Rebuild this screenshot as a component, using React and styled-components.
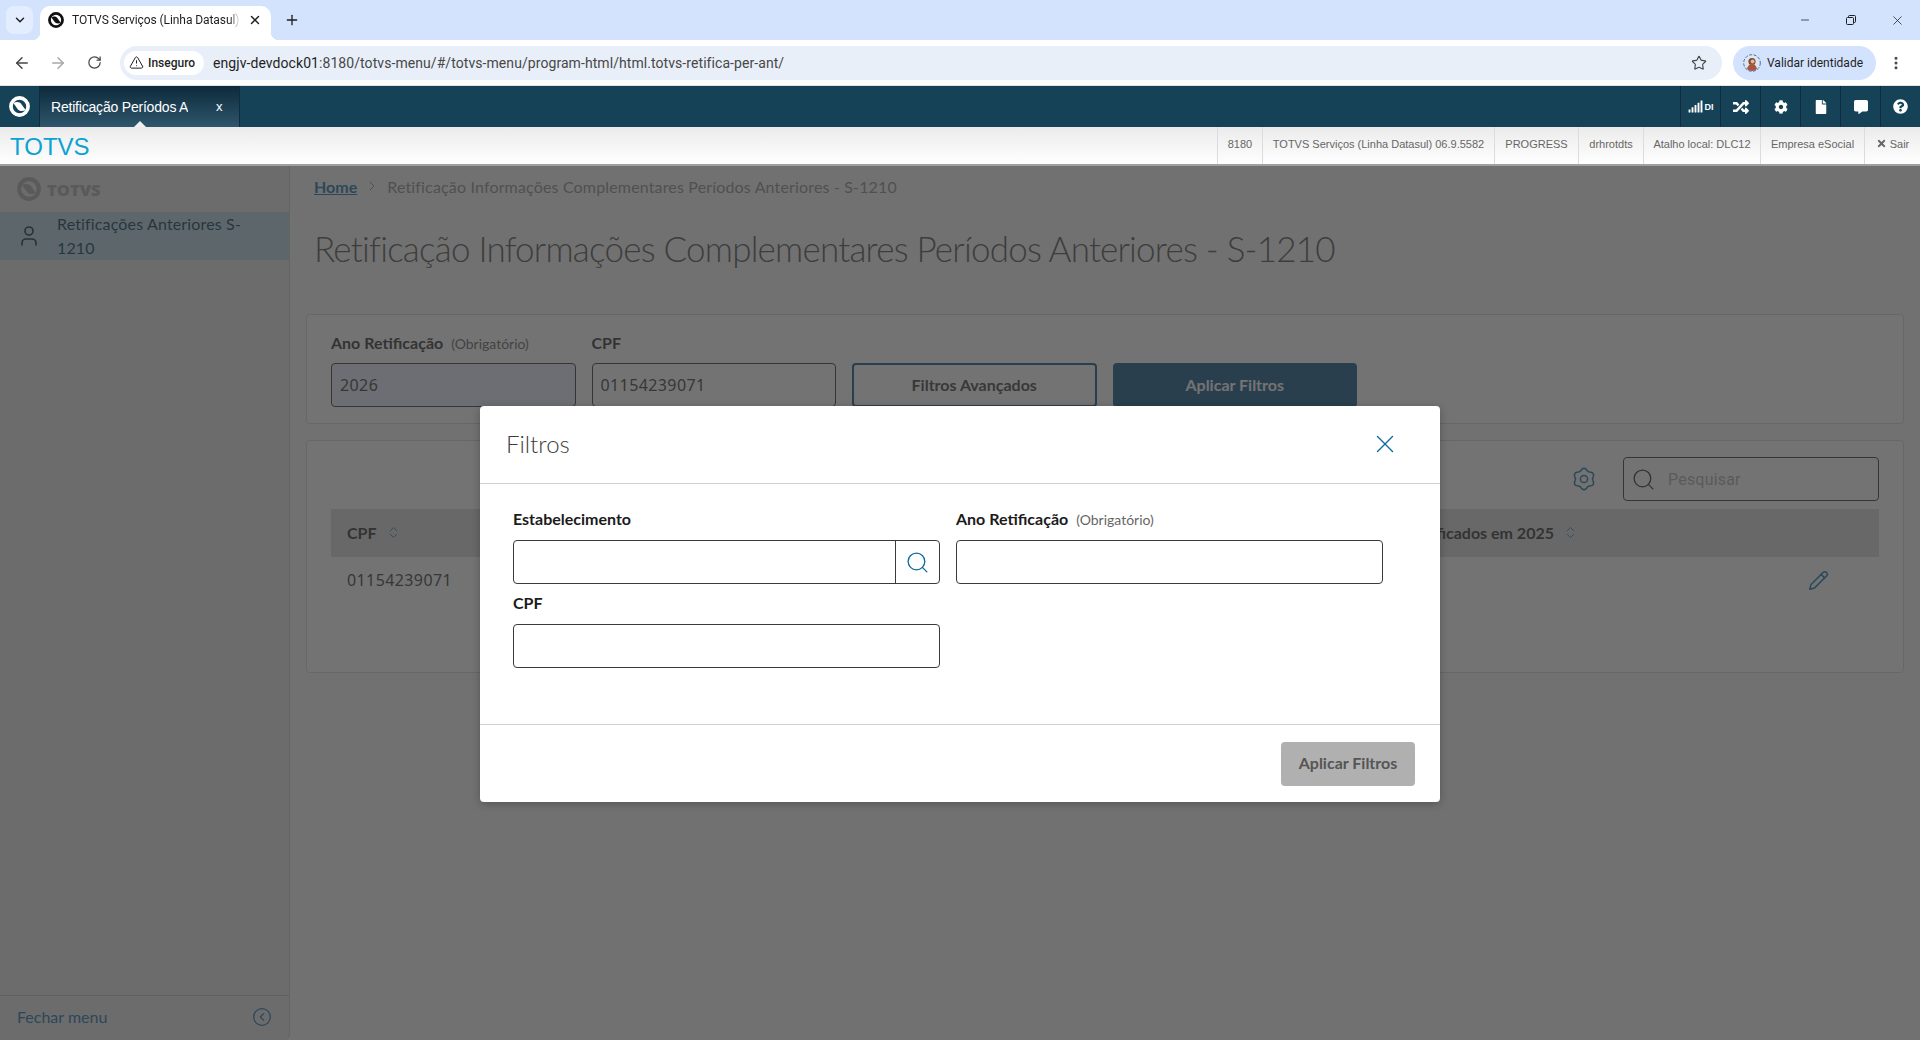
import React from 'react';
import styled, { createGlobalStyle } from 'styled-components';
import { ArrowLeft, ArrowRight, RotateCw, TriangleAlert, Star, EllipsisVertical, Plus, X, ChevronDown, Minus, Search, Pencil, User, ChevronsUpDown, CircleChevronLeft, ChevronRight } from 'lucide-react';
import { FaSignal, FaRandom, FaCog, FaFile, FaCommentAlt, FaQuestionCircle, FaTimes } from 'react-icons/fa';

const Global = createGlobalStyle`
  html, body { margin: 0; padding: 0; height: 100%; overflow: hidden; background: #fff; }
  * { box-sizing: border-box; }
  #root { height: 1040px; }
`;

const UI = `"Lato", "Noto Sans", sans-serif`;
const CHROME = `"Roboto", "Noto Sans", sans-serif`;
const BLUE = '#1a74ad';

const Shell = styled.div`display: flex; flex-direction: column; height: 1040px; width: 1920px; overflow: hidden;`;

/* browser chrome */
const TabStrip = styled.div`height: 40px; background: #d3e3fd; display: flex; align-items: flex-end; position: relative; padding-left: 6px;`;
const TabListBtn = styled.div`width: 27px; height: 28px; margin-bottom: 6px; border-radius: 8px; background: #e3edfd; display: flex; align-items: center; justify-content: center; color: #1f1f1f;`;
const BrowserTab = styled.div`
  width: 231px; height: 34px; margin-left: 7px; background: #fff; border-radius: 10px 10px 0 0;
  display: flex; align-items: center; padding: 0 8px 6px 8px; position: relative;
  font: 12px ${CHROME}; color: #1f1f1f;
  &::before, &::after { content: ''; position: absolute; bottom: 0; width: 8px; height: 8px; }
  &::before { left: -8px; background: radial-gradient(circle at 0 0, #d3e3fd 8px, #fff 8.5px); }
  &::after { right: -8px; background: radial-gradient(circle at 100% 0, #d3e3fd 8px, #fff 8.5px); }
`;
const TabTitle = styled.span`margin-left: 8px; width: 168px; white-space: nowrap; overflow: hidden; line-height: 16px; flex: none; letter-spacing: -0.08px;
  -webkit-mask-image: linear-gradient(90deg, #000 94%, transparent); mask-image: linear-gradient(90deg, #000 94%, transparent);`;
const TabClose = styled.span`margin-left: 8px; display: flex;`;
const NewTab = styled.div`margin: 0 0 6px 7px; width: 28px; height: 28px; display: flex; align-items: center; justify-content: center; color: #1f1f1f;`;
const WindowControls = styled.div`margin-left: auto; display: flex; height: 40px; align-items: center; color: #1f1f1f;`;
const WinBtn = styled.div`width: 46px; height: 40px; display: flex; align-items: center; justify-content: center;`;

const Toolbar = styled.div`height: 46px; background: #fff; display: flex; align-items: center; border-radius: 8px 8px 0 0; position: relative; border-bottom: 1px solid #e3e3e3; padding-left: 4px;`;
const NavBtn = styled.div`width: 36px; height: 34px; display: flex; align-items: center; justify-content: center; color: ${p => p.$dim ? '#a8a8a8' : '#474747'};`;
const Omnibox = styled.div`width: 1602px; height: 34px; margin-left: 8px; background: #e9eff9; border-radius: 17px; display: flex; align-items: center; padding-left: 4px; position: relative;`;
const Chip = styled.div`width: 80px; height: 24px; border-radius: 12px; background: #fff; display: flex; align-items: center; padding-left: 5px; gap: 4px; font: 500 12px ${CHROME}; color: #1f1f1f;`;
const Url = styled.div`margin-left: 9px; font: 14px ${CHROME}; letter-spacing: 0.07px; color: #474747; white-space: nowrap;`;
const Host = styled.span`color: #1f1f1f;`;
const StarBox = styled.div`margin-left: auto; margin-right: 15px; display: flex; color: #474747;`;
const Identity = styled.div`margin-left: 11px; width: 143px; height: 34px; border-radius: 17px; background: #d3e3fd; display: flex; align-items: center; padding-left: 10px; font: 12px ${CHROME}; color: #1f1f1f; gap: 6px; white-space: nowrap;`;
const More = styled.div`margin-left: 12px; display: flex; color: #474747;`;

/* application header */
const AppBar = styled.div`height: 41px; background: #164257; display: flex; align-items: stretch;`;
const LogoCell = styled.div`width: 40px; display: flex; align-items: center; justify-content: center; border-right: 1px solid #0e2c3d;`;
const AppTab = styled.div`
  width: 200px; background: linear-gradient(#0d2a3b, #2f566c); border-right: 1px solid #0e2c3d; position: relative;
  display: flex; align-items: center; padding-left: 11px; color: #fff; font: 14px "Liberation Sans", sans-serif; letter-spacing: -0.2px;
  &::after { content: ''; position: absolute; left: 50%; bottom: 0; margin-left: -6px; border: 6px solid transparent; border-top: 0; border-bottom-color: #efefef; }
`;
const AppTabTitle = styled.span`width: 137px; overflow: hidden; white-space: nowrap;`;
const AppTabClose = styled.span`margin-left: 28px; font-size: 13px;`;
const AppIcons = styled.div`margin-left: auto; display: flex;`;
const AppIcon = styled.div`width: 40px; border-left: 1px solid #0e2c3d; display: flex; align-items: center; justify-content: center; color: #fff; font: bold 9px "Liberation Sans", sans-serif; gap: 2px;`;

const InfoBar = styled.div`height: 39px; background: linear-gradient(#ebebeb, #fff); border-bottom: 2px solid #a0a0a0; display: flex; align-items: stretch;`;
const Brand = styled.div`margin: 2px 0 0 10px; font: 24px/36px "Liberation Sans", sans-serif; color: #0ba3d3;`;
const InfoCells = styled.div`margin-left: auto; display: flex;`;
const InfoCell = styled.div`width: ${p => p.$w}px; border-left: 1px solid #dcdcdc; display: flex; align-items: center; justify-content: center; gap: 3px; font: 11px "Liberation Sans", sans-serif; color: #666; white-space: nowrap; padding-bottom: 4px;`;

/* page */
const Page = styled.div`flex: 1; display: flex; position: relative; background: #f9f9f9; min-height: 0;`;
const Sidebar = styled.aside`width: 290px; flex: none; background: #e8e8e8; border-right: 1px solid #cfcfcf; border-radius: 0 0 6px 0; display: flex; flex-direction: column; font-family: ${UI};`;
const SideLogo = styled.div`height: 46px; display: flex; align-items: center; padding-left: 17px; gap: 6px; color: #afafaf; font: 800 16.5px "Open Sans", sans-serif; flex: none;`;
const SideItem = styled.div`height: 48px; background: #b8d8e6; display: flex; align-items: center; padding-bottom: 1px; color: #0c3e55; font-size: 16px; line-height: 24px; letter-spacing: 0.15px; flex: none;`;
const SideIcon = styled.div`width: 57px; display: flex; justify-content: center; color: #0c2c3a;`;
const SideLabel = styled.div`width: 210px;`;
const SideFooter = styled.div`margin-top: auto; height: 45px; border-top: 1px solid #bfbfbf; display: flex; align-items: center; justify-content: space-between; padding: 0 17px 3px; color: ${BLUE}; font-size: 16px;`;

const Main = styled.main`flex: 1; min-width: 0; padding: 8px 16px 0 16px; font-family: ${UI}; display: flex; flex-direction: column;`;
const Crumbs = styled.nav`margin-left: 8px; height: 24px; display: flex; align-items: center; gap: 7px; font-size: 16px; letter-spacing: 0.16px; color: #8f8f8f;`;
const CrumbLink = styled.a`color: ${BLUE}; font-weight: 700; text-decoration: underline; letter-spacing: 0;`;
const Title = styled.h1`margin: 26px 0 42px 8px; font-weight: 300; font-size: 35px; letter-spacing: -0.78px; line-height: 48px; color: #555; white-space: nowrap;`;
const Card = styled.section`border: 1px solid #d9d9d9; border-radius: 4px; background: #fff; padding: 16px 24px; height: ${p => p.$h}px; margin-bottom: 16px; flex: none;`;
const FilterGrid = styled.div`display: grid; grid-template-columns: repeat(4, 244.5px); column-gap: 16px; align-items: end;`;
const LabelRow = styled.div`height: 24px; line-height: 24px; display: flex; align-items: baseline; gap: 8px; font-size: 16px; font-weight: 700; color: ${p => p.$dark ? '#1b1b1b' : '#333'}; white-space: nowrap;`;
const Optional = styled.span`font-size: 14px; font-weight: 400; color: #666;`;
const Input = styled.div`
  height: 44px; margin-top: ${p => p.$mt ?? 8}px; border: 1px solid #3a3a3a; border-radius: 4px; background: ${p => p.$filled ? '#e8f0fe' : '#fff'};
  display: flex; align-items: center; justify-content: ${p => p.$end ? 'flex-end' : 'flex-start'}; padding-left: ${p => p.$pl ?? 8}px; font: 16px "Noto Sans", sans-serif; letter-spacing: 0.4px; color: #404040;
`;
const OutlineBtn = styled.div`height: 44px; border: 2px solid #14598a; border-radius: 4px; padding-bottom: 2px; display: flex; align-items: center; justify-content: center; font-size: 16px; font-weight: 700; color: #444;`;
const SolidBtn = styled.div`height: 44px; border-radius: 4px; background: #14598a; padding-bottom: 2px; display: flex; align-items: center; justify-content: center; font-size: 16px; font-weight: 700; color: #fff;`;
const TableTools = styled.div`display: flex; justify-content: flex-end; align-items: center; gap: 27px; margin-bottom: 8px; color: ${BLUE};`;
const SearchBox = styled.div`width: 256px; height: 44px; border: 1px solid #3a3a3a; border-radius: 4px; display: flex; align-items: center; padding-left: 7px; gap: 12px; color: #333; font: 16px "Roboto", sans-serif;`;
const Placeholder = styled.span`color: #b0b0b0; letter-spacing: 0.2px;`;
const TableHead = styled.div`height: 48px; background: #dcdcdc; display: flex; align-items: center; justify-content: space-between; padding: 0 301px 2px 16px; font-size: 16px; font-weight: 700; color: #333;`;
const HeadCell = styled.div`display: flex; align-items: center; gap: 9px;`;
const SortIcon = styled.span`display: flex; color: ${BLUE};`;
const TableRow = styled.div`height: 46px; display: flex; align-items: center; justify-content: space-between; padding: 0 50px 0 16px; font: 16px "Noto Sans", sans-serif; letter-spacing: 0.4px; color: #404040;`;
const EditIcon = styled.span`display: flex; color: ${BLUE};`;

/* modal */
const Overlay = styled.div`position: absolute; inset: 0; background: rgba(51,51,51,.686); display: flex; align-items: center; justify-content: center; padding-top: 2px;`;
const Modal = styled.div`width: 960px; height: 396px; background: #fff; border-radius: 4px; box-shadow: 0 2px 8px rgba(0,0,0,.25); display: flex; flex-direction: column; font-family: ${UI};`;
const ModalHead = styled.header`height: 78px; flex: none; border-bottom: 1px solid #d0d0d0; display: flex; align-items: center; justify-content: space-between; padding: 0 40px 2px 26px;`;
const ModalTitle = styled.h2`margin: 0; font-size: 24px; font-weight: 300; color: #3d3d3d;`;
const CloseBtn = styled.span`display: flex; color: #0b6aa2;`;
const ModalBody = styled.div`flex: 1; padding: 23px 57px 0 33px; display: grid; grid-template-columns: 427px 427px; column-gap: 16px; row-gap: 7px; align-content: start;`;
const LookupBtn = styled.div`width: 44px; border-left: 1px solid #3a3a3a; display: flex; align-items: center; justify-content: center; color: #0b6aa2; height: 100%;`;
const ModalFoot = styled.footer`height: 78px; flex: none; border-top: 1px solid #d0d0d0; display: flex; align-items: center; justify-content: flex-end; padding: 0 25px 0 0;`;
const DisabledBtn = styled.div`width: 134px; height: 44px; border-radius: 4px; background: #b0b0b0; color: #555; padding-bottom: 2px; display: flex; align-items: center; justify-content: center; font-size: 16px; font-weight: 700;`;

const TotvsLogo = ({ size, color }) => (
  <svg width={size} height={size} viewBox="0 0 24 24">
    <circle cx="12" cy="12" r="9.8" fill="none" stroke={color} strokeWidth="4.2" />
    <path d="M5 8 C9 6 12.5 7 14 9 L19 16 C15 18 11.5 17 10 15 Z" fill={color} />
  </svg>
);

const RestoreIcon = () => (
  <svg width="10" height="10" viewBox="0 0 10 10" fill="none" stroke="#1f1f1f" strokeWidth="1">
    <rect x="0.5" y="2.5" width="7" height="7" rx="1" />
    <path d="M2.5 2.5V1.5a1 1 0 0 1 1-1h5a1 1 0 0 1 1 1v5a1 1 0 0 1-1 1h-1" />
  </svg>
);

const Avatar = () => (
  <svg width="18" height="18" viewBox="0 0 18 18">
    <circle cx="9" cy="9" r="8.3" fill="#dfe6f0" stroke="#4a6fa8" strokeWidth="1" strokeDasharray="3 1.5" />
    <circle cx="9" cy="7.5" r="3.6" fill="#7a4a32" />
    <path d="M4 15c1-4 3-5 5-5s4 1 5 5a7 7 0 0 1-10 0z" fill="#a5573f" />
    <circle cx="9.6" cy="7.5" r="2" fill="#e3b79c" />
  </svg>
);

const flowerPoints = Array.from({ length: 72 }, (_, i) => {
  const t = (i / 72) * Math.PI * 2;
  const r = 9.6 + 1.1 * Math.cos(6 * t);
  return `${(12 + r * Math.sin(t)).toFixed(2)},${(12 - r * Math.cos(t)).toFixed(2)}`;
}).join(' ');

const GearIcon = () => (
  <svg width="24" height="24" viewBox="0 0 24 24" fill="none" stroke="currentColor" strokeWidth="1.5">
    <polygon points={flowerPoints} strokeLinejoin="round" />
    <circle cx="12" cy="12" r="3.6" />
  </svg>
);

export default function App() {
  return (
    <Shell>
      <Global />
      <TabStrip>
        <TabListBtn><ChevronDown size={14} strokeWidth={2.5} /></TabListBtn>
        <BrowserTab>
          <TotvsLogo size={16} color="#111" />
          <TabTitle>TOTVS Serviços (Linha Datasul) 06.9.5582</TabTitle>
          <TabClose><X size={14} strokeWidth={2.5} /></TabClose>
        </BrowserTab>
        <NewTab><Plus size={16} strokeWidth={2} /></NewTab>
        <WindowControls>
          <WinBtn><Minus size={12} strokeWidth={1.5} /></WinBtn>
          <WinBtn><RestoreIcon /></WinBtn>
          <WinBtn><X size={15} strokeWidth={1.2} /></WinBtn>
        </WindowControls>
      </TabStrip>
      <Toolbar>
        <NavBtn><ArrowLeft size={18} strokeWidth={2} /></NavBtn>
        <NavBtn $dim><ArrowRight size={18} strokeWidth={2} /></NavBtn>
        <NavBtn><RotateCw size={15} strokeWidth={2} /></NavBtn>
        <Omnibox>
          <Chip><TriangleAlert size={15} strokeWidth={1.6} />Inseguro</Chip>
          <Url><Host>engjv-devdock01</Host>:8180/totvs-menu/#/totvs-menu/program-html/html.totvs-retifica-per-ant/</Url>
          <StarBox><Star size={16} strokeWidth={1.7} /></StarBox>
        </Omnibox>
        <Identity><Avatar />Validar identidade</Identity>
        <More><EllipsisVertical size={16} strokeWidth={2.5} /></More>
      </Toolbar>

      <AppBar>
        <LogoCell><TotvsLogo size={21} color="#fff" /></LogoCell>
        <AppTab>
          <AppTabTitle>Retificação Períodos Anteriores</AppTabTitle>
          <AppTabClose>x</AppTabClose>
        </AppTab>
        <AppIcons>
          <AppIcon><FaSignal size={15} />DI</AppIcon>
          <AppIcon><FaRandom size={16} /></AppIcon>
          <AppIcon><FaCog size={14} /></AppIcon>
          <AppIcon><FaFile size={14} /></AppIcon>
          <AppIcon><FaCommentAlt size={14} /></AppIcon>
          <AppIcon><FaQuestionCircle size={15} /></AppIcon>
        </AppIcons>
      </AppBar>
      <InfoBar>
        <Brand>TOTVS</Brand>
        <InfoCells>
          <InfoCell $w={45}>8180</InfoCell>
          <InfoCell $w={232}>TOTVS Serviços (Linha Datasul) 06.9.5582</InfoCell>
          <InfoCell $w={84}>PROGRESS</InfoCell>
          <InfoCell $w={65}>drhrotdts</InfoCell>
          <InfoCell $w={117}>Atalho local: DLC12</InfoCell>
          <InfoCell $w={104}>Empresa eSocial</InfoCell>
          <InfoCell $w={56}><FaTimes size={11} />Sair</InfoCell>
        </InfoCells>
      </InfoBar>

      <Page>
        <Sidebar>
          <SideLogo><TotvsLogo size={24} color="#afafaf" />TOTVS</SideLogo>
          <SideItem>
            <SideIcon><User size={24} strokeWidth={1.6} /></SideIcon>
            <SideLabel>Retificações Anteriores S-1210</SideLabel>
          </SideItem>
          <SideFooter>Fechar menu<CircleChevronLeft size={20} strokeWidth={1.5} /></SideFooter>
        </Sidebar>
        <Main>
          <Crumbs>
            <CrumbLink>Home</CrumbLink>
            <ChevronRight size={16} strokeWidth={1.5} />
            <span>Retificação Informações Complementares Períodos Anteriores - S-1210</span>
          </Crumbs>
          <Title>Retificação Informações Complementares Períodos Anteriores - S-1210</Title>
          <Card $h={110}>
            <FilterGrid>
              <div>
                <LabelRow>Ano Retificação <Optional>(Obrigatório)</Optional></LabelRow>
                <Input $filled>2026</Input>
              </div>
              <div>
                <LabelRow>CPF</LabelRow>
                <Input>01154239071</Input>
              </div>
              <OutlineBtn>Filtros Avançados</OutlineBtn>
              <SolidBtn>Aplicar Filtros</SolidBtn>
            </FilterGrid>
          </Card>
          <Card $h={233}>
            <TableTools>
              <GearIcon />
              <SearchBox><Search size={25} strokeWidth={1.25} /><Placeholder>Pesquisar</Placeholder></SearchBox>
            </TableTools>
            <TableHead>
              <HeadCell>CPF<SortIcon><ChevronsUpDown size={15} strokeWidth={1.3} /></SortIcon></HeadCell>
              <HeadCell>Valores Retificados em 2025<SortIcon><ChevronsUpDown size={15} strokeWidth={1.3} /></SortIcon></HeadCell>
            </TableHead>
            <TableRow>
              <span>01154239071</span>
              <EditIcon><Pencil size={21} strokeWidth={1.7} /></EditIcon>
            </TableRow>
          </Card>
        </Main>
        <Overlay>
          <Modal>
            <ModalHead>
              <ModalTitle>Filtros</ModalTitle>
              <CloseBtn><X size={30} strokeWidth={1.1} /></CloseBtn>
            </ModalHead>
            <ModalBody>
              <div>
                <LabelRow $dark>Estabelecimento</LabelRow>
                <Input $mt={9} $pl={0} $end>
                  <LookupBtn><Search size={25} strokeWidth={1.25} /></LookupBtn>
                </Input>
              </div>
              <div>
                <LabelRow $dark>Ano Retificação <Optional>(Obrigatório)</Optional></LabelRow>
                <Input $mt={9} />
              </div>
              <div>
                <LabelRow $dark>CPF</LabelRow>
                <Input $mt={9} />
              </div>
            </ModalBody>
            <ModalFoot><DisabledBtn>Aplicar Filtros</DisabledBtn></ModalFoot>
          </Modal>
        </Overlay>
      </Page>
    </Shell>
  );
}
